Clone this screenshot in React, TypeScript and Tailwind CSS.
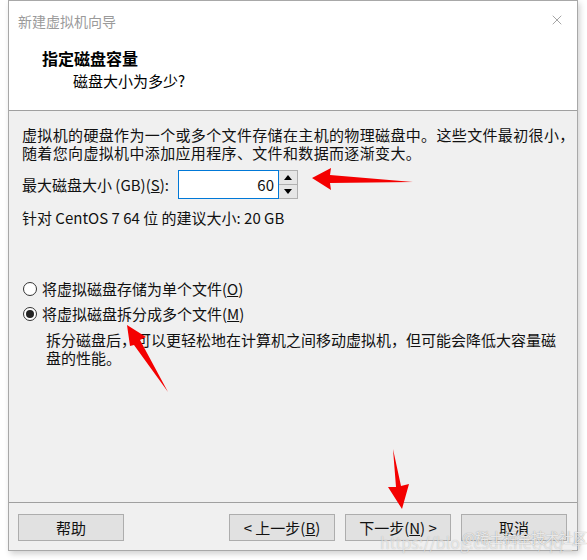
import { X } from 'lucide-react'

const FONT = { fontFamily: '"Microsoft YaHei", "Noto Sans CJK SC", "Noto Sans", sans-serif' }

function WizardButton({ children }: { children: React.ReactNode }) {
  return (
    <button className="w-[106px] h-[27px] bg-[#e1e1e1] border border-[#adadad] text-[15px] leading-none text-[#111] flex items-center justify-center">
      {children}
    </button>
  )
}

function Radio({ checked }: { checked?: boolean }) {
  return (
    <span className="w-[14px] h-[14px] rounded-full border border-[#333] bg-white flex items-center justify-center shrink-0">
      {checked && <span className="w-[8px] h-[8px] rounded-full bg-[#222]" />}
    </span>
  )
}

export default function App() {
  return (
    <div className="relative w-[587px] h-[560px] bg-white overflow-hidden" style={FONT}>
      <div className="ml-[8px] w-[570px] h-[551px] border border-[#a8a8a8] bg-[#f0f0f0] flex flex-col shadow-[2px_3px_6px_rgba(0,0,0,0.18)]">
        {/* header */}
        <div className="h-[110px] shrink-0 bg-white border-b border-[#a0a0a0] relative">
          <div className="pl-[9px] pt-[10px] text-[14px] leading-[20px] text-[#9a9a9a]">新建虚拟机向导</div>
          <X className="absolute right-[12px] top-[11px] w-[16px] h-[16px] text-[#777]" strokeWidth={1} />
          <div className="pl-[33px] pt-[17px] text-[16px] leading-[20px] font-bold text-black">指定磁盘容量</div>
          <div className="pl-[64px] pt-[3px] text-[15px] leading-[20px] text-black">磁盘大小为多少?</div>
        </div>

        {/* body */}
        <div className="flex-1 pl-[13px] pt-[15px] text-[15px] leading-[18px] text-[#111]">
          <p className="tracking-[0.35px]">
            虚拟机的硬盘作为一个或多个文件存储在主机的物理磁盘中。这些文件最初很小，
            <br />
            随着您向虚拟机中添加应用程序、文件和数据而逐渐变大。
          </p>

          <div className="mt-[8px] flex items-center h-[29px]">
            <span className="w-[156px]">
              最大磁盘大小 (GB)(<span className="underline">S</span>):
            </span>
            <div className="flex h-[29px]">
              <div className="w-[101px] h-[29px] bg-white border border-[#0078d7] flex items-center justify-end pr-[4px] text-[15px]">
                60
              </div>
              <div className="flex flex-col w-[19px] h-[29px] border border-[#b0b0b0] border-l-0 bg-[#f0f0f0]">
                <div className="flex-1 flex items-center justify-center border-b border-[#b0b0b0] bg-[#e6e6e6]">
                  <span className="w-0 h-0 border-l-[4px] border-r-[4px] border-b-[5px] border-l-transparent border-r-transparent border-b-black" />
                </div>
                <div className="flex-1 flex items-center justify-center bg-[#e6e6e6]">
                  <span className="w-0 h-0 border-l-[4px] border-r-[4px] border-t-[5px] border-l-transparent border-r-transparent border-t-black" />
                </div>
              </div>
            </div>
          </div>

          <div className="mt-[10px]">针对 CentOS 7 64 位 的建议大小: 20 GB</div>

          <div className="mt-[53px] pl-[1px] flex flex-col gap-[7px]">
            <label className="flex items-center gap-[5px]">
              <Radio />
              <span>
                将虚拟磁盘存储为单个文件(<span className="underline">O</span>)
              </span>
            </label>
            <label className="flex items-center gap-[5px]">
              <Radio checked />
              <span>
                将虚拟磁盘拆分成多个文件(<span className="underline">M</span>)
              </span>
            </label>
          </div>
          <p className="mt-[8px] pl-[24px]">
            拆分磁盘后，可以更轻松地在计算机之间移动虚拟机，但可能会降低大容量磁
            <br />
            盘的性能。
          </p>
        </div>

        {/* footer */}
        <div className="h-[48px] shrink-0 border-t border-[#a0a0a0] flex items-start pt-[11px] pl-[9px] pr-[10px]">
          <WizardButton>帮助</WizardButton>
          <div className="ml-auto flex gap-[10px]">
            <WizardButton>
              &lt; 上一步(<span className="underline">B</span>)
            </WizardButton>
            <WizardButton>
              下一步(<span className="underline">N</span>) &gt;
            </WizardButton>
            <WizardButton>取消</WizardButton>
          </div>
        </div>
      </div>

      {/* annotations */}
      <svg className="absolute inset-0 pointer-events-none" width="587" height="560" viewBox="0 0 587 560">
        <polygon points="312,178 331,168 330,175 413,182 330,183 331,190" fill="#f40000" />
        <polygon points="127,325 146,337 140,340 168,392 134,345 130,346" fill="#f40000" />
        <polygon points="393,449 401,486 409,484 402,509 388,487 396,487" fill="#f40000" />
      </svg>
      <div className="absolute left-[380px] top-[530px] text-[16px] text-white/60 [text-shadow:0_0_1px_rgba(0,0,0,0.25)] pointer-events-none whitespace-nowrap">
        https://blog.csdn.net/qq_4
      </div>
      <div className="absolute left-[462px] top-[527px] text-[14px] text-white/80 [text-shadow:0_0_1px_rgba(0,0,0,0.45)] pointer-events-none whitespace-nowrap">
        @稀土掘金技术社区
      </div>
    </div>
  )
}
